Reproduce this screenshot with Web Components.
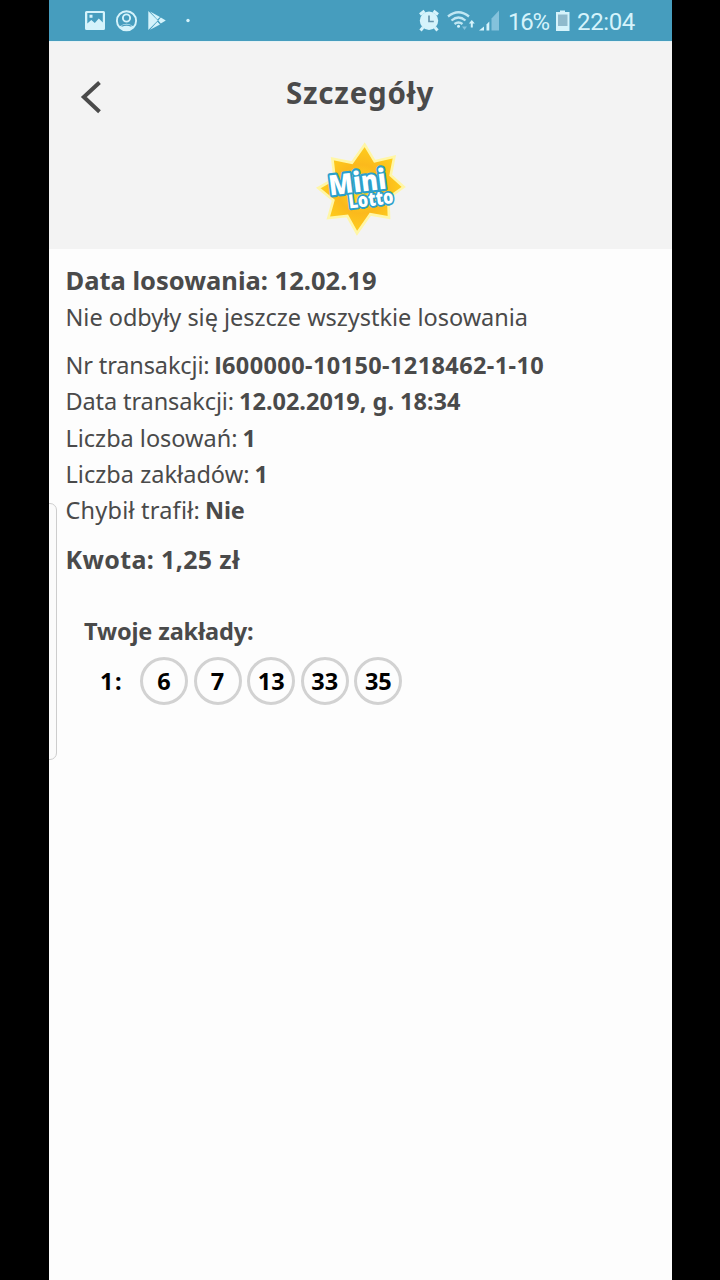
<!DOCTYPE html>
<html lang="pl">
<head>
<meta charset="utf-8">
<title>Szczegóły</title>
<style>
  body {
    margin: 0;
    background: #000;
    font-family: "Noto Sans", "Open Sans", sans-serif;
    color: #4a4a4a;
  }
</style>
</head>
<body>
<phone-screen>
  <status-bar slot="status"></status-bar>
  <page-header slot="header" heading="Szczegóły">
    <lotto-logo></lotto-logo>
  </page-header>
  <ticket-details></ticket-details>
</phone-screen>

<script>
// Text spread evenly over a given width
class FitText extends HTMLElement {
  connectedCallback() {
    this.attachShadow({ mode: "open" });
    this.shadowRoot.innerHTML = `
      <style>
        :host { display: block; flex: none; }
        span { display: inline-block; white-space: nowrap; vertical-align: top; }
      </style>
      <span><slot></slot></span>
    `;
    const width = Number(this.getAttribute("width"));
    const span = this.shadowRoot.querySelector("span");
    const natural = span.getBoundingClientRect().width;
    this.style.width = width + "px";
    span.style.letterSpacing = (width - natural) / this.textContent.length + "px";
  }
}

class PhoneScreen extends HTMLElement {
  connectedCallback() {
    this.attachShadow({ mode: "open" });
    this.shadowRoot.innerHTML = `
      <style>
        :host {
          display: flex;
          flex-direction: column;
          position: relative;
          width: 623px;
          height: 1280px;
          margin-left: 49px;
          background: #fdfdfd;
          overflow: hidden;
        }
        .edge-handle {
          position: absolute;
          left: -12px;
          top: 503px;
          width: 18px;
          height: 255px;
          border: 1px solid #cdcdcd;
          border-radius: 7px;
          background: #fbfbfb;
        }
      </style>
      <slot name="status"></slot>
      <slot name="header"></slot>
      <slot></slot>
      <div class="edge-handle"></div>
    `;
  }
}

class StatusBar extends HTMLElement {
  connectedCallback() {
    this.attachShadow({ mode: "open" });
    this.shadowRoot.innerHTML = `
      <style>
        :host {
          display: flex;
          justify-content: space-between;
          align-items: center;
          height: 41px;
          padding: 0 37px 0 35px;
          box-sizing: border-box;
          background: #469dbe;
          color: #d5f3fb;
          font: 24px/41px Roboto, sans-serif;
        }
        div { display: flex; align-items: center; }
        svg { display: block; flex: none; }
        fit-text { margin-top: 3px; }
      </style>
      <div>
        <svg width="110" height="41" viewBox="0 0 110 41">
          <path fill="#d5f3fb" fill-rule="evenodd" d="M2.500 11h17a1.500 1.500 0 0 1 1.500 1.500v16a1.500 1.500 0 0 1-1.500 1.500h-17a1.500 1.500 0 0 1-1.500-1.500v-16a1.500 1.500 0 0 1 1.500-1.500zM3.300 13v10.500l4-3.500 3.500 3 4-4.500 4 4V13zM5.500 14.800h3v3h-3z"/>
          <g fill="none" stroke="#d5f3fb" stroke-width="1.900">
            <circle cx="42.500" cy="20.800" r="9.600"/>
            <circle cx="42.500" cy="18" r="3.600"/>
          </g>
          <path fill="#d5f3fb" d="M35.500 26.500q7-5.500 14 0q-3 4-7 4t-7-4z"/>
          <path fill="none" stroke="#469dbe" stroke-width="1.200" d="M37.500 26.300q5-2.500 10 0"/>
          <path fill="#d5f3fb" d="M64.300 11l9.500 9.500-9.500 9.500zM66 11.500l10 5.400-2.600 2.600zM66 29.800l10-5.400-2.600-2.600zM76.800 17.600l5 3-5 3-2.500-3z"/>
          <circle cx="104" cy="20.500" r="1.700" fill="#d5f3fb"/>
        </svg>
      </div>
      <div>
        <svg width="89" height="41" viewBox="0 0 89 41">
          <g fill="none" stroke="#d5f3fb" stroke-width="3">
            <path d="M1 14.500l4.500-3.500M19 14.500L14.500 11M4 27.500l-2.500 3M16 27.500l2.500 3"/>
          </g>
          <circle cx="10" cy="20.800" r="9.200" fill="#d5f3fb"/>
          <path d="M10 15.500v6h4.800" fill="none" stroke="#6694ac" stroke-width="1.700"/>
          <g fill="none" stroke="#c0e7f3" stroke-width="2.300">
            <path d="M29 16.500q10.500-8.500 21 0"/>
            <path d="M32.500 20.500q7-6 14 0"/>
            <path d="M35.500 24q4-3 8 0"/>
          </g>
          <circle cx="39.500" cy="26.300" r="1.500" fill="#d5f3fb"/>
          <path d="M43 26.500h5l-2.500 3.500z" fill="#84c2dc"/>
          <path d="M51.800 27.500v-4h-2l3-3.500 3 3.500h-2v4z" fill="#d5f3fb"/>
          <path d="M60 30.500l5-4v4z" fill="#d5f3fb"/>
          <path d="M67.500 24.500l2.800-3v9h-2.800z" fill="#d5f3fb"/>
          <path d="M72.500 18.500l7.500-8v20h-7.500z" fill="#84c2dc"/>
        </svg>
        <fit-text width="41">16%</fit-text>
        <svg width="28" height="41" viewBox="0 0 28 41">
          <path d="M11 10.500h5V12h4.500v19H7V12h4z" fill="#d5f3fb"/>
          <path d="M9 14.500h9.500V26H9z" fill="#8fbacc"/>
        </svg>
        <fit-text width="58">22:04</fit-text>
      </div>
    `;
  }
}

class PageHeader extends HTMLElement {
  connectedCallback() {
    this.attachShadow({ mode: "open" });
    this.shadowRoot.innerHTML = `
      <style>
        :host {
          display: block;
          height: 207.500px;
          background: #f3f3f3;
          border-top: 1px solid #e6f2f5;
          box-sizing: border-box;
        }
        .bar {
          display: grid;
          grid-template-columns: 237px 1fr;
          height: 88px;
        }
        svg { display: block; margin: 37px 0 0 30px; }
        .heading {
          margin-top: 30px;
          font-size: 29.5px;
          line-height: 42px;
          font-weight: bold;
        }
        .logo { display: flex; justify-content: center; }
      </style>
      <div class="bar">
        <svg width="26" height="36" viewBox="0 0 26 36">
          <path d="M20.500 3.500L4.800 18l15.700 14.700" fill="none" stroke="#4a4a4a" stroke-width="4"/>
        </svg>
        <div class="heading"><fit-text width="148">${this.getAttribute("heading")}</fit-text></div>
      </div>
      <div class="logo"><slot></slot></div>
    `;
  }
}

class LottoLogo extends HTMLElement {
  connectedCallback() {
    this.attachShadow({ mode: "open" });
    this.shadowRoot.innerHTML = `
      <style>
        :host { display: block; }
        svg { display: block; }
        text {
          font-family: "Open Sans", "Noto Sans", sans-serif;
          font-weight: 800;
          fill: #fff;
          stroke: #2ba0cc;
          paint-order: stroke;
          stroke-linejoin: round;
        }
      </style>
      <svg width="120" height="118" viewBox="0 0 360 354">
        <defs>
          <radialGradient id="sun" cx="50%" cy="50%" r="55%">
            <stop offset="0" stop-color="#ffdc20"/>
            <stop offset="0.500" stop-color="#fbb91c"/>
            <stop offset="1" stop-color="#ffd31c"/>
          </radialGradient>
        </defs>
        <path d="M191 44L221 94L280 80L269 136L308 171L262 204L264 263L208 253L168 310L139 258L82 264L97 211L52 174L101 146L94 86L153 98Z" fill="url(#sun)" stroke="#fff6a6" stroke-width="8"/>
        <g transform="rotate(-7 180 180)">
          <text x="86" y="185" font-size="84" stroke-width="13" textLength="172" lengthAdjust="spacingAndGlyphs">Mini</text>
          <text x="138" y="231" font-size="58" stroke-width="11" textLength="136" lengthAdjust="spacingAndGlyphs">Lotto</text>
        </g>
      </svg>
    `;
  }
}

class DetailRow extends HTMLElement {
  connectedCallback() {
    this.attachShadow({ mode: "open" });
    this.shadowRoot.innerHTML = `
      <style>
        :host { display: flex; gap: 5px; line-height: 36.250px; }
        ::slotted([slot="value"]) { font-weight: bold; }
      </style>
      <slot></slot>
      <slot name="value"></slot>
    `;
  }
}

class NumberBall extends HTMLElement {
  connectedCallback() {
    this.attachShadow({ mode: "open" });
    this.shadowRoot.innerHTML = `
      <style>
        :host {
          display: flex;
          align-items: center;
          justify-content: center;
          width: 48px;
          height: 48px;
          box-sizing: border-box;
          border: 3px solid #d2d2d2;
          border-radius: 50%;
        }
      </style>
      <span><slot></slot></span>
    `;
  }
}

class TicketDetails extends HTMLElement {
  connectedCallback() {
    this.attachShadow({ mode: "open" });
    this.shadowRoot.innerHTML = `
      <style>
        :host {
          display: block;
          padding: 13.500px 16.500px;
          font-size: 23.500px;
          line-height: 36px;
        }
        .draw { font-size: 25.500px; font-weight: bold; }
        .note { margin-top: 1px; }
        .rows { margin-top: 12px; }
        .plain { font-family: Lato, sans-serif; font-weight: 900; }
        .amount { margin-top: 13px; font-size: 25px; font-weight: bold; }
        .bets-title { margin: 36px 0 0 18.500px; font-weight: bold; }
        .bet {
          display: flex;
          align-items: center;
          margin: 8px 0 0 34.500px;
          color: #000;
          font-weight: bold;
        }
        .balls { display: flex; gap: 5.600px; margin-left: 17px; }
      </style>
      <fit-text class="draw" width="311">Data losowania: 12.02.19</fit-text>
      <fit-text class="note" width="462.5">Nie odbyły się jeszcze wszystkie losowania</fit-text>
      <div class="rows">
        <detail-row><fit-text width="144">Nr transakcji:</fit-text><fit-text slot="value" width="330">
<span class="plain">I</span>600000-10150-1218462-1-10</fit-text></detail-row>
        <detail-row><fit-text width="168.5">Data transakcji:</fit-text><fit-text slot="value" width="221.5">12.02.2019, g. 18:34</fit-text></detail-row>
        <detail-row><fit-text width="172">Liczba losowań:</fit-text><fit-text slot="value" width="13">1</fit-text></detail-row>
        <detail-row><fit-text width="184">Liczba zakładów:</fit-text><fit-text slot="value" width="13">1</fit-text></detail-row>
        <detail-row><fit-text width="134.5">Chybił trafił:</fit-text><fit-text slot="value" width="39.5">Nie</fit-text></detail-row>
      </div>
      <fit-text class="amount" width="174.5">Kwota: 1,25 zł</fit-text>
      <fit-text class="bets-title" width="169.5">Twoje zakłady:</fit-text>
      <div class="bet">
        <fit-text width="23">1:</fit-text>
        <div class="balls">
          ${[6, 7, 13, 33, 35].map((n) => `<number-ball>${n}</number-ball>`).join("")}
        </div>
      </div>
    `;
  }
}

customElements.define("fit-text", FitText);
customElements.define("phone-screen", PhoneScreen);
customElements.define("status-bar", StatusBar);
customElements.define("page-header", PageHeader);
customElements.define("lotto-logo", LottoLogo);
customElements.define("detail-row", DetailRow);
customElements.define("number-ball", NumberBall);
customElements.define("ticket-details", TicketDetails);
</script>
</body>
</html>
